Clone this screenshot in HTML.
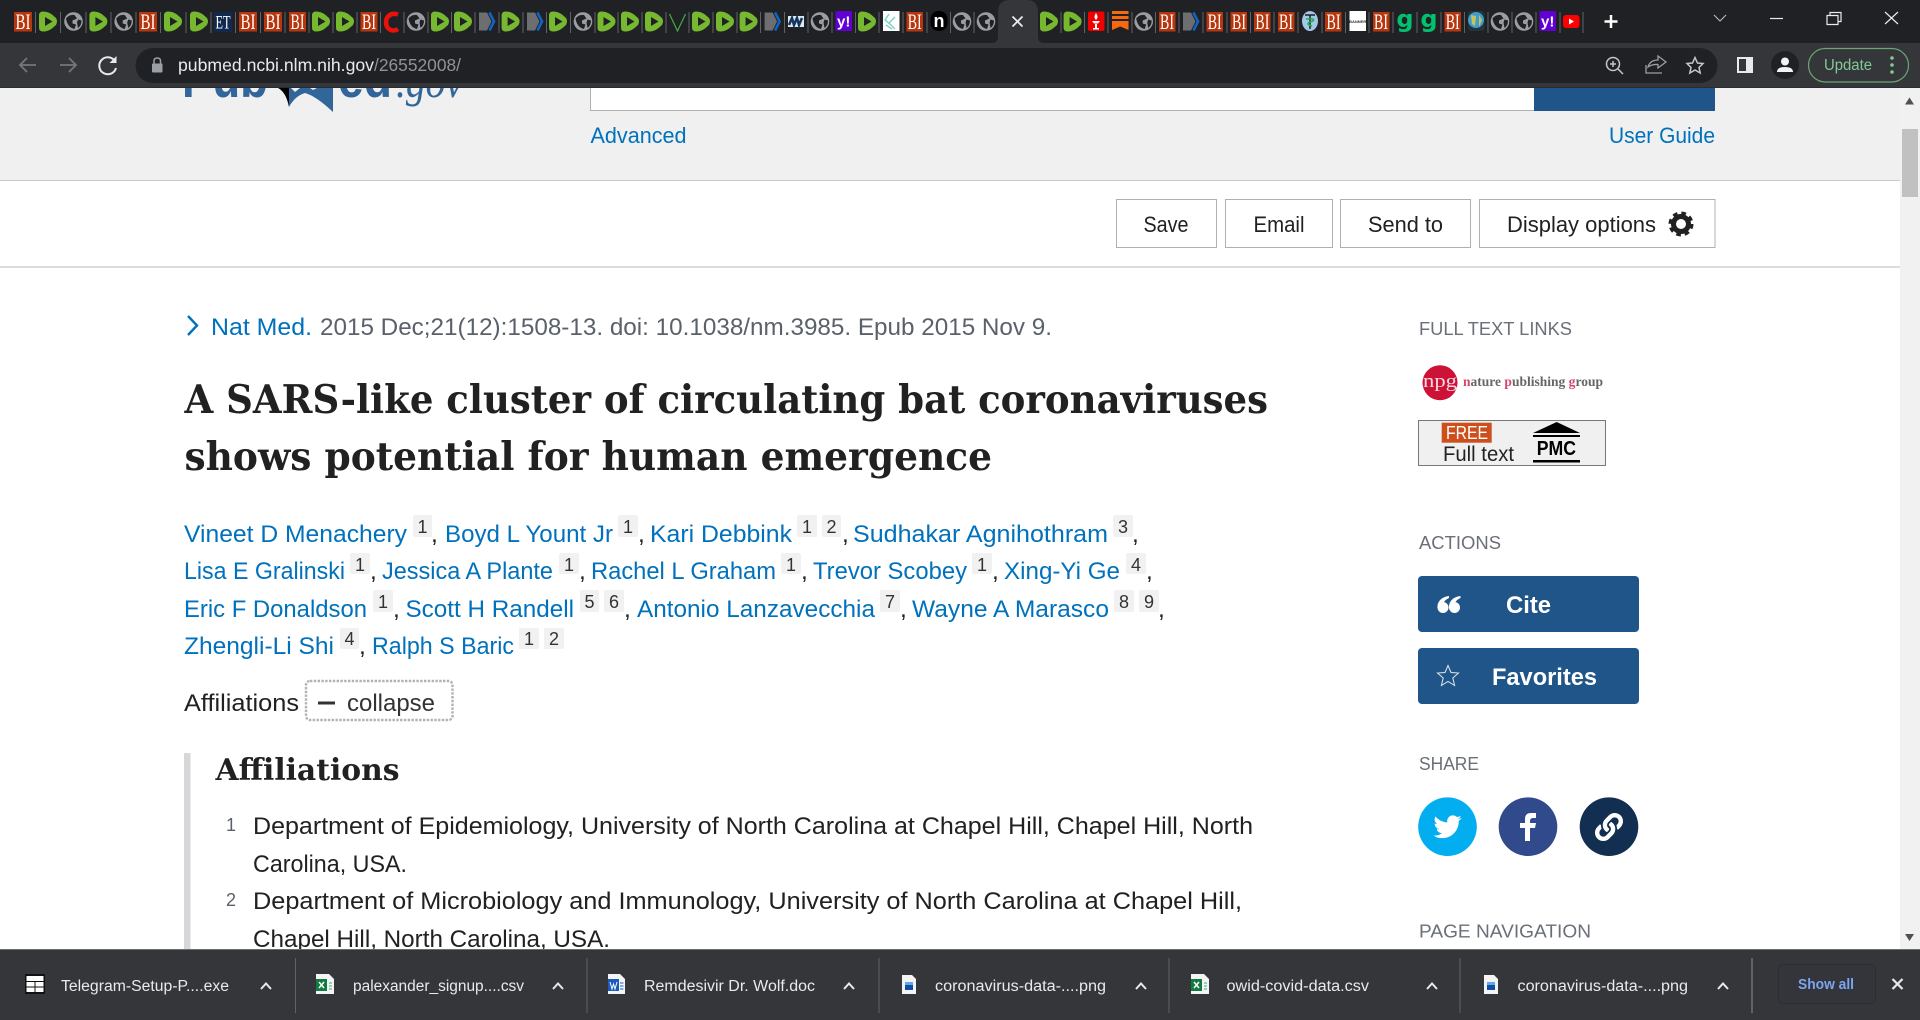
<!DOCTYPE html>
<html lang="en">
<head>
<meta charset="utf-8">
<title>A SARS-like cluster of circulating bat coronaviruses - PubMed</title>
<style>
html,body{margin:0;padding:0;background:#fff;overflow:hidden;width:1920px;height:1020px}
svg{display:block}
text{font-family:"Liberation Sans",sans-serif}
.l{fill:#0071bc;font-size:24.5px}
.b{fill:#212121;font-size:24.5px}
.c{fill:#212121;font-size:24.5px}
.s{fill:#333;font-size:18px;text-anchor:middle}
.h{fill:#6a6f78;font-size:18.5px}
.bi{font-family:"Liberation Serif",serif;font-size:22px;fill:#fff;text-anchor:middle}
.dl{fill:#e8eaed;font-size:15.5px}
.btn{fill:#212121;font-size:22.5px;text-anchor:middle}
.t{font-family:"DejaVu Serif",serif;font-weight:bold;font-size:39px;fill:#212121}
</style>
</head>
<body>
<svg width="1920" height="1020" viewBox="0 0 1920 1020" xmlns="http://www.w3.org/2000/svg">
<defs>
<clipPath id="pg"><rect x="0" y="88" width="1920" height="861"/></clipPath>
<g id="d"><path d="M-9-6Q-9-10-5-10Q0-10 4-7L8-3.5Q10-.5 8 3.5L4 7Q0 10-5 10Q-9 10-9 6Z" fill="#76b82f"/><path d="M-3-4.5L4.5 0L-3 4.5Z" fill="#202124"/></g>
<g id="w"><circle r="9.3" fill="#9a9ea3"/><path d="M-7.5-3Q-4-7.5 1-6.5L3.5-3L-1-1L-1 2L2.5 3L1 7.5Q-6 6-7.5-3Z" fill="#202124"/><path d="M4.5-2L8-1Q8 4 4.5 6.5L3.5 1Z" fill="#202124"/></g>
<g id="a"><path d="M-8-9H0L4.5 0L0 9H-8Z" fill="#6d6e71"/><path d="M2.5-9L7 0L2.5 9" fill="none" stroke="#0e66c2" stroke-width="2.6"/></g>
<g id="xl"><path d="M0 0H13L18 5V20H0Z" fill="#f4f4f4"/><rect x="0" y="5" width="11" height="12" fill="#107c41"/><path d="M3 8L8 14M8 8L3 14" stroke="#fff" stroke-width="1.5"/><path d="M13 9H16M13 12H16M13 15H16" stroke="#5fb98a" stroke-width="1.3"/></g>
<g id="im"><path d="M0 0H10L14 4V19H0Z" fill="#f4f4f4"/><rect x="3" y="7" width="8" height="8" fill="#0f4ea8"/><rect x="3" y="7" width="8" height="3" fill="#66a6e8"/></g>
</defs>

<!-- tab strip -->
<rect x="0" y="0" width="1920" height="43" fill="#202124"/>
<path d="M992 43Q998 43 998 36V12Q998 0 1010 0H1026Q1038 0 1038 12V36Q1038 43 1044 43Z" fill="#35363a"/>
<path d="M35.5 12v21M60.5 12v21M86 12v21M111 12v21M136 12v21M160.5 12v21M186 12v21M211 12v21M235.5 12v21M260.5 12v21M285 12v21M309 12v21M333 12v21M357 12v21M380.5 12v21M404 12v21M428 12v21M451.5 12v21M475 12v21M499 12v21M523 12v21M546.5 12v21M570.5 12v21M595 12v21M618 12v21M642 12v21M666 12v21M689 12v21M713 12v21M737 12v21M760.5 12v21M784.5 12v21M808 12v21M832 12v21M855.5 12v21M879 12v21M903 12v21M927 12v21M950.5 12v21M974 12v21M1061 12v21M1084.5 12v21M1108 12v21M1132 12v21M1155.5 12v21M1179 12v21M1203 12v21M1227 12v21M1250.5 12v21M1274 12v21M1298 12v21M1322 12v21M1345.5 12v21M1369 12v21M1393 12v21M1417 12v21M1441 12v21M1464.5 12v21M1488 12v21M1512 12v21M1536 12v21M1560 12v21M1583 12v21" stroke="#5f6368" stroke-width="1" fill="none"/>

<g>
<rect x="14" y="12" width="18" height="19.5" fill="#b8360e"/><text class="bi" x="23" y="29" textLength="15" lengthAdjust="spacingAndGlyphs">BI</text>
<use href="#d" x="48" y="21.5"/><use href="#w" x="73.5" y="21.5"/><use href="#d" x="98.4" y="21.5"/><use href="#w" x="123.7" y="21.5"/>
<rect x="139" y="12" width="18" height="19.5" fill="#b8360e"/><text class="bi" x="148" y="29" textLength="15" lengthAdjust="spacingAndGlyphs">BI</text>
<use href="#d" x="173" y="21.5"/><use href="#d" x="199" y="21.5"/>
<rect x="214" y="12" width="18" height="20" fill="#12294f"/><text class="bi" x="223" y="28.5" style="font-size:19px" textLength="15" lengthAdjust="spacingAndGlyphs">ET</text>
<rect x="239" y="12" width="18" height="19.5" fill="#b8360e"/><text class="bi" x="248" y="29" textLength="15" lengthAdjust="spacingAndGlyphs">BI</text>
<rect x="264" y="12" width="18" height="19.5" fill="#b8360e"/><text class="bi" x="273" y="29" textLength="15" lengthAdjust="spacingAndGlyphs">BI</text>
<rect x="289" y="12" width="17" height="19.5" fill="#b8360e"/><text class="bi" x="297.5" y="29" textLength="14" lengthAdjust="spacingAndGlyphs">BI</text>
<use href="#d" x="321" y="21.5"/><use href="#d" x="345" y="21.5"/>
<rect x="360.5" y="12" width="17" height="19.5" fill="#b8360e"/><text class="bi" x="369" y="29" textLength="14" lengthAdjust="spacingAndGlyphs">BI</text>
<path d="M398 14.5Q390 12 386.5 19Q385 26 389 29Q393 32 398 29" fill="none" stroke="#e8110c" stroke-width="4.5"/>
<use href="#w" x="416" y="21.5"/><use href="#d" x="440" y="21.5"/><use href="#d" x="463" y="21.5"/><use href="#a" x="487" y="21.5"/><use href="#d" x="510.6" y="21.5"/><use href="#a" x="535" y="21.5"/><use href="#d" x="558" y="21.5"/><use href="#w" x="583" y="21.5"/><use href="#d" x="606.5" y="21.5"/><use href="#d" x="630" y="21.5"/><use href="#d" x="654" y="21.5"/>
<path d="M669.5 14L677.5 31L685.5 14" fill="none" stroke="#3fae49" stroke-width="1.2"/>
<use href="#d" x="701" y="21.5"/><use href="#d" x="725" y="21.5"/><use href="#d" x="748.6" y="21.5"/><use href="#a" x="772.6" y="21.5"/>
<rect x="788" y="16" width="16" height="11" fill="#dfe7ef"/><path d="M789 25L792 18L794 25L797 18L799 25L802 18" fill="none" stroke="#12365f" stroke-width="2.5"/>
<use href="#w" x="820" y="21.5"/>
<rect x="835.5" y="11" width="16.5" height="20" fill="#6001d2"/><text x="843.7" y="26.5" fill="#fff" text-anchor="middle" style="font-size:15px;font-weight:bold">y!</text>
<use href="#d" x="867" y="21.5"/>
<rect x="883" y="11" width="16.5" height="20" fill="#fff"/><path d="M889 14L885 20L891 25M895 17L889 23L895 29M886 25L892 29" fill="none" stroke="#7fd3c6" stroke-width="1.5"/>
<rect x="906.5" y="12" width="16.5" height="19.5" fill="#b8360e"/><text class="bi" x="914.7" y="29" textLength="14" lengthAdjust="spacingAndGlyphs">BI</text>
<rect x="930.5" y="11" width="17" height="20" rx="8" fill="#000"/><text x="939" y="27" text-anchor="middle" style="font-size:18px;font-weight:bold" fill="#fff">n</text>
<use href="#w" x="962" y="21.5"/><use href="#w" x="986" y="21.5"/>
<path d="M1012.5 16.5L1022.5 26.5M1022.5 16.5L1012.5 26.5" stroke="#e8eaed" stroke-width="1.8" fill="none"/>
<use href="#d" x="1049" y="21.5"/><use href="#d" x="1072.6" y="21.5"/>
<rect x="1088" y="11.5" width="16.5" height="19.5" rx="2" fill="#f00000"/><path d="M1096 13Q1099 17 1096 20Q1093 17 1096 13ZM1092 21H1100L1098 23.5H1094ZM1095 24H1097V28H1095ZM1093 28H1099V29.5H1093Z" fill="#fff"/>
<rect x="1112" y="11" width="16.5" height="3" fill="#f7690f"/><rect x="1112" y="16" width="16.5" height="3" fill="#f7690f"/><path d="M1112 21H1128.5V30L1120.25 26.5L1112 30Z" fill="#f7690f"/>
<use href="#w" x="1143.7" y="21.5"/>
<rect x="1159" y="12" width="16.5" height="19.5" fill="#b8360e"/><text class="bi" x="1167" y="29" textLength="14" lengthAdjust="spacingAndGlyphs">BI</text>
<use href="#a" x="1191" y="21.5"/>
<rect x="1206.5" y="12" width="16.5" height="19.5" fill="#b8360e"/><text class="bi" x="1214.7" y="29" textLength="14" lengthAdjust="spacingAndGlyphs">BI</text>
<rect x="1230.5" y="12" width="16.5" height="19.5" fill="#b8360e"/><text class="bi" x="1239" y="29" textLength="14" lengthAdjust="spacingAndGlyphs">BI</text>
<rect x="1254" y="12" width="16.5" height="19.5" fill="#b8360e"/><text class="bi" x="1262.4" y="29" textLength="14" lengthAdjust="spacingAndGlyphs">BI</text>
<rect x="1278" y="12" width="16.5" height="19.5" fill="#b8360e"/><text class="bi" x="1286" y="29" textLength="14" lengthAdjust="spacingAndGlyphs">BI</text>
<ellipse cx="1310" cy="21" rx="8" ry="10" fill="#a4c6e8"/><path d="M1305 15H1315M1310 15V29" stroke="#222" stroke-width="1.5"/><path d="M1306 19H1313Q1315 21 1310 22Q1305 24 1312 26" fill="none" stroke="#1fae4a" stroke-width="1.5"/>
<rect x="1325" y="12" width="16.5" height="19.5" fill="#b8360e"/><text class="bi" x="1333.5" y="29" textLength="14" lengthAdjust="spacingAndGlyphs">BI</text>
<rect x="1349.5" y="11" width="16.5" height="20" fill="#fff"/><text x="1357.7" y="23" text-anchor="middle" style="font-size:4px;font-weight:bold" fill="#333">BANNER</text>
<rect x="1373" y="12" width="16.5" height="19.5" fill="#b8360e"/><text class="bi" x="1381" y="29" textLength="14" lengthAdjust="spacingAndGlyphs">BI</text>
<text x="1405" y="27" text-anchor="middle" style="font-family:'DejaVu Sans',sans-serif;font-size:24px;font-weight:bold" fill="#00c26e">g</text>
<text x="1429" y="27" text-anchor="middle" style="font-family:'DejaVu Sans',sans-serif;font-size:24px;font-weight:bold" fill="#00c26e">g</text>
<rect x="1444.5" y="12" width="16.5" height="19.5" fill="#b8360e"/><text class="bi" x="1452.7" y="29" textLength="14" lengthAdjust="spacingAndGlyphs">BI</text>
<rect x="1468" y="11" width="16.5" height="20" rx="3" fill="#24333d"/><circle cx="1476" cy="20" r="8" fill="#3f9ccf"/><path d="M1471 15L1476 16L1475 26L1472 24ZM1479 15L1482 20L1479 27Z" fill="#c6c35a"/>
<use href="#w" x="1500" y="21.5"/><use href="#w" x="1524" y="21.5"/>
<rect x="1539.5" y="11" width="16.5" height="20" fill="#6001d2"/><text x="1547.7" y="26.5" text-anchor="middle" style="font-size:15px;font-weight:bold" fill="#fff">y!</text>
<rect x="1563" y="15" width="16.5" height="13" rx="3" fill="#f00"/><path d="M1569 18.5L1574 21.5L1569 24.5Z" fill="#fff"/>
</g>

<path d="M1611 15V28M1604.5 21.5H1617.5" stroke="#fff" stroke-width="2.5"/>
<path d="M1714 15L1720 21L1726 15" fill="none" stroke="#bdc1c6" stroke-width="1"/>
<path d="M1770 18.5H1783" stroke="#e8eaed" stroke-width="1.2"/>
<path d="M1827 15.5H1838V24.5H1827ZM1830 15.5V12.5H1841V21.5H1838" fill="none" stroke="#e8eaed" stroke-width="1.2"/>
<path d="M1885 12L1898 24M1898 12L1885 24" stroke="#e8eaed" stroke-width="1.2"/>

<!-- toolbar -->
<rect x="0" y="43" width="1920" height="45" fill="#35363a"/>
<rect x="135.5" y="48" width="1582" height="35" rx="17.5" fill="#202124"/>
<path d="M36 65H20M27 58L20 65L27 72" fill="none" stroke="#75767a" stroke-width="1.8"/>
<path d="M60 65H76M69 58L76 65L69 72" fill="none" stroke="#75767a" stroke-width="1.8"/>
<path d="M114.5 60.5A8.5 8.5 0 1 0 116 68" fill="none" stroke="#e8eaed" stroke-width="2"/><path d="M116.5 56V63H109.5Z" fill="#e8eaed"/>
<rect x="152" y="63.5" width="10.5" height="9" rx="1" fill="#9aa0a6"/><path d="M154 64V61Q154 58 157.25 58Q160.5 58 160.5 61V64" fill="none" stroke="#9aa0a6" stroke-width="1.5"/>
<text x="178" y="71" style="font-size:17.5px" fill="#e8eaed" textLength="196" lengthAdjust="spacingAndGlyphs">pubmed.ncbi.nlm.nih.gov</text>
<text x="374" y="71" style="font-size:17.5px" fill="#8f9399" textLength="87" lengthAdjust="spacingAndGlyphs">/26552008/</text>
<circle cx="1613" cy="64" r="6.5" fill="none" stroke="#c4c7c5" stroke-width="1.5"/><path d="M1618 69L1623 74M1610 64H1616M1613 61V67" stroke="#c4c7c5" stroke-width="1.5"/>
<path d="M1646 65V73H1662M1648 67Q1650 60 1658 60V56L1666 62L1658 68V64.5Q1652 64 1648 67Z" fill="none" stroke="#9b9ea2" stroke-width="1.3"/>
<path d="M1695 57.5L1697.5 63L1703 63.5L1699 67.5L1700.2 73L1695 70L1689.8 73L1691 67.5L1687 63.5L1692.5 63Z" fill="none" stroke="#c4c7c5" stroke-width="1.5"/>
<rect x="1737" y="57" width="16" height="16" fill="#e8eaed"/><rect x="1739" y="59" width="7" height="12" fill="#35363a"/>
<circle cx="1785" cy="65" r="14" fill="#202124"/><circle cx="1785" cy="61.5" r="4" fill="#f1f3f4"/><path d="M1777 72Q1777 67 1785 67Q1793 67 1793 72Z" fill="#f1f3f4"/>
<rect x="1808.5" y="48.5" width="100" height="33.5" rx="16.75" fill="none" stroke="#6aa674" stroke-width="1.2"/>
<text x="1824" y="70" style="font-size:15.5px" fill="#81c995" textLength="48" lengthAdjust="spacingAndGlyphs">Update</text>
<circle cx="1892" cy="58" r="1.8" fill="#81c995"/><circle cx="1892" cy="65" r="1.8" fill="#81c995"/><circle cx="1892" cy="72" r="1.8" fill="#81c995"/>
<rect x="0" y="87" width="1920" height="1" fill="#2b2c2f"/>

<!-- page -->
<g clip-path="url(#pg)">
<rect x="0" y="88" width="1920" height="861" fill="#fff"/>
<rect x="0" y="88" width="1900" height="92" fill="#f0f0f0"/>
<rect x="0" y="180" width="1900" height="1" fill="#c8c8c8"/>
<!-- logo -->
<text x="182" y="97" style="font-size:56px;font-weight:bold" fill="#326599" textLength="86" lengthAdjust="spacingAndGlyphs">Pub</text>
<text x="338" y="97" style="font-size:56px;font-weight:bold" fill="#326599" textLength="54" lengthAdjust="spacingAndGlyphs">ed</text>
<text x="396" y="97" style="font-family:'Liberation Serif',serif;font-size:46px;font-style:italic" fill="#326599" textLength="67" lengthAdjust="spacingAndGlyphs">.gov</text>
<path d="M278 88Q286 92 289 107V88Z" fill="#000"/>
<path d="M289 107V88H333V112Q316 96 305 93Q295 96 289 107Z" fill="#326599"/>
<path d="M291 88L295 92L300 88ZM310 88L313 90L317 88Z" fill="#f0f0f0"/>
<!-- search -->
<rect x="590" y="88" width="944" height="22" fill="#fff"/>
<path d="M590.5 88V110.5H1534" fill="none" stroke="#aeb0b5" stroke-width="1"/>
<rect x="1534" y="88" width="181" height="23" fill="#20558a"/>
<text x="590.5" y="143" class="l" style="font-size:22px" textLength="96" lengthAdjust="spacingAndGlyphs">Advanced</text>
<text x="1609" y="143" class="l" style="font-size:22px" textLength="106" lengthAdjust="spacingAndGlyphs">User Guide</text>
<!-- action row -->
<g fill="#fff" stroke="#aeb0b5" stroke-width="1">
<rect x="1116.5" y="199.5" width="100" height="48"/>
<rect x="1225.5" y="199.5" width="107" height="48"/>
<rect x="1340.5" y="199.5" width="130" height="48"/>
<rect x="1479.5" y="199.5" width="235.5" height="48"/>
</g>
<text class="btn" x="1166" y="232" textLength="45" lengthAdjust="spacingAndGlyphs">Save</text>
<text class="btn" x="1279" y="232" textLength="51" lengthAdjust="spacingAndGlyphs">Email</text>
<text class="btn" x="1405.5" y="232" textLength="75" lengthAdjust="spacingAndGlyphs">Send to</text>
<text x="1507" y="232" style="font-size:22.5px" fill="#212121" textLength="149" lengthAdjust="spacingAndGlyphs">Display options</text>
<circle cx="1681" cy="224" r="7.5" fill="none" stroke="#212121" stroke-width="5"/>
<circle cx="1681" cy="224" r="10.5" fill="none" stroke="#212121" stroke-width="4" stroke-dasharray="4.5 3.75"/>
<rect x="0" y="266" width="1900" height="2" fill="#dcdcdc"/>
<!-- citation -->
<path d="M188 316L197 325.5L188 335" fill="none" stroke="#0071bc" stroke-width="2.4"/>
<text x="211" y="335" class="l" style="font-size:24px" textLength="101" lengthAdjust="spacingAndGlyphs">Nat Med.</text>
<text x="320" y="335" style="font-size:24px" fill="#5b616b" textLength="732" lengthAdjust="spacingAndGlyphs">2015 Dec;21(12):1508-13. doi: 10.1038/nm.3985. Epub 2015 Nov 9.</text>
<!-- title -->
<text class="t" x="184.5" y="413" textLength="1083.5" lengthAdjust="spacingAndGlyphs">A SARS-like cluster of circulating bat coronaviruses</text>
<text class="t" x="184.5" y="470" textLength="807.5" lengthAdjust="spacingAndGlyphs">shows potential for human emergence</text>
<!-- author boxes -->
<g fill="#f1f1f1">
<rect x="413" y="515" width="19" height="22" rx="2"/><rect x="618" y="515" width="20" height="22" rx="2"/><rect x="797" y="515" width="20" height="22" rx="2"/><rect x="822" y="515" width="19" height="22" rx="2"/><rect x="1113" y="515" width="20" height="22" rx="2"/>
<rect x="350" y="553" width="20" height="21" rx="2"/><rect x="559" y="553" width="20" height="21" rx="2"/><rect x="781" y="553" width="20" height="21" rx="2"/><rect x="972" y="553" width="20" height="21" rx="2"/><rect x="1126" y="553" width="20" height="21" rx="2"/>
<rect x="373" y="590" width="20" height="22" rx="2"/><rect x="580" y="590" width="19" height="22" rx="2"/><rect x="604" y="590" width="20" height="22" rx="2"/><rect x="880" y="590" width="20" height="22" rx="2"/><rect x="1114" y="590" width="20" height="22" rx="2"/><rect x="1139" y="590" width="20" height="22" rx="2"/>
<rect x="340" y="628" width="19" height="21" rx="2"/><rect x="519" y="628" width="20" height="21" rx="2"/><rect x="544" y="628" width="20" height="21" rx="2"/>
</g>
<!-- line 1 -->
<text class="l" x="184" y="542" textLength="223" lengthAdjust="spacingAndGlyphs">Vineet D Menachery</text><text class="s" x="422.5" y="533">1</text><text class="c" x="431" y="542">,</text>
<text class="l" x="445" y="542" textLength="168" lengthAdjust="spacingAndGlyphs">Boyd L Yount Jr</text><text class="s" x="628" y="533">1</text><text class="c" x="638" y="542">,</text>
<text class="l" x="650" y="542" textLength="142" lengthAdjust="spacingAndGlyphs">Kari Debbink</text><text class="s" x="807" y="533">1</text><text class="s" x="831.5" y="533">2</text><text class="c" x="842" y="542">,</text>
<text class="l" x="853" y="542" textLength="255" lengthAdjust="spacingAndGlyphs">Sudhakar Agnihothram</text><text class="s" x="1123" y="533">3</text><text class="c" x="1132" y="542">,</text>
<!-- line 2 -->
<text class="l" x="184" y="579" textLength="161" lengthAdjust="spacingAndGlyphs">Lisa E Gralinski</text><text class="s" x="360" y="571">1</text><text class="c" x="370" y="579">,</text>
<text class="l" x="382" y="579" textLength="171" lengthAdjust="spacingAndGlyphs">Jessica A Plante</text><text class="s" x="569" y="571">1</text><text class="c" x="579" y="579">,</text>
<text class="l" x="591" y="579" textLength="185" lengthAdjust="spacingAndGlyphs">Rachel L Graham</text><text class="s" x="791" y="571">1</text><text class="c" x="801" y="579">,</text>
<text class="l" x="813" y="579" textLength="154" lengthAdjust="spacingAndGlyphs">Trevor Scobey</text><text class="s" x="982" y="571">1</text><text class="c" x="992" y="579">,</text>
<text class="l" x="1004" y="579" textLength="116" lengthAdjust="spacingAndGlyphs">Xing-Yi Ge</text><text class="s" x="1136" y="571">4</text><text class="c" x="1146" y="579">,</text>
<!-- line 3 -->
<text class="l" x="184" y="617" textLength="183" lengthAdjust="spacingAndGlyphs">Eric F Donaldson</text><text class="s" x="383" y="608">1</text><text class="c" x="393" y="617">,</text>
<text class="l" x="405.5" y="617" textLength="168.5" lengthAdjust="spacingAndGlyphs">Scott H Randell</text><text class="s" x="589.5" y="608">5</text><text class="s" x="614" y="608">6</text><text class="c" x="624" y="617">,</text>
<text class="l" x="637" y="617" textLength="238" lengthAdjust="spacingAndGlyphs">Antonio Lanzavecchia</text><text class="s" x="890" y="608">7</text><text class="c" x="900" y="617">,</text>
<text class="l" x="912" y="617" textLength="197" lengthAdjust="spacingAndGlyphs">Wayne A Marasco</text><text class="s" x="1124" y="608">8</text><text class="s" x="1149" y="608">9</text><text class="c" x="1158" y="617">,</text>
<!-- line 4 -->
<text class="l" x="184" y="654" textLength="150" lengthAdjust="spacingAndGlyphs">Zhengli-Li Shi</text><text class="s" x="349.5" y="645">4</text><text class="c" x="359" y="654">,</text>
<text class="l" x="372" y="654" textLength="142" lengthAdjust="spacingAndGlyphs">Ralph S Baric</text><text class="s" x="529" y="645">1</text><text class="s" x="554" y="645">2</text>
<!-- affiliations toggle -->
<text class="b" x="184" y="711" textLength="115" lengthAdjust="spacingAndGlyphs">Affiliations</text>
<rect x="306" y="681" width="146.5" height="39" rx="4" fill="none" stroke="#b0b1b5" stroke-width="2.4" stroke-dasharray="2.4 1.4"/>
<rect x="318" y="701.5" width="17" height="3" fill="#333"/>
<text x="347" y="711" style="font-size:24.5px" fill="#333" textLength="88" lengthAdjust="spacingAndGlyphs">collapse</text>
<!-- affiliations -->
<rect x="184" y="753" width="6.5" height="200" fill="#d6d7d9"/>
<text x="215.5" y="780" style="font-family:'DejaVu Serif',serif;font-weight:bold;font-size:30px" fill="#212121" textLength="184" lengthAdjust="spacingAndGlyphs">Affiliations</text>
<text x="226" y="831" style="font-size:18px" fill="#5b616b">1</text>
<text class="b" x="253" y="834" textLength="1000" lengthAdjust="spacingAndGlyphs">Department of Epidemiology, University of North Carolina at Chapel Hill, Chapel Hill, North</text>
<text class="b" x="253" y="872" textLength="154" lengthAdjust="spacingAndGlyphs">Carolina, USA.</text>
<text x="226" y="906" style="font-size:18px" fill="#5b616b">2</text>
<text class="b" x="253" y="909" textLength="989" lengthAdjust="spacingAndGlyphs">Department of Microbiology and Immunology, University of North Carolina at Chapel Hill,</text>
<text class="b" x="253" y="947" textLength="357" lengthAdjust="spacingAndGlyphs">Chapel Hill, North Carolina, USA.</text>
<!-- sidebar -->
<text class="h" x="1419" y="335" textLength="153" lengthAdjust="spacingAndGlyphs">FULL TEXT LINKS</text>
<circle cx="1440" cy="382.7" r="17.5" fill="#cc1236"/>
<text x="1440" y="387" text-anchor="middle" style="font-family:'Liberation Serif',serif;font-size:19px" fill="#f8d8df" textLength="34" lengthAdjust="spacingAndGlyphs">npg</text>
<text x="1463" y="386" style="font-family:'Liberation Serif',serif;font-size:14px;font-weight:bold" fill="#666" textLength="140" lengthAdjust="spacingAndGlyphs"><tspan fill="#d8476b">n</tspan>ature <tspan fill="#d8476b">p</tspan>ublishing <tspan fill="#d8476b">g</tspan>roup</text>
<rect x="1418.5" y="420.5" width="187" height="45" fill="#f0f0f0" stroke="#777" stroke-width="1"/>
<rect x="1441.7" y="422.7" width="50" height="20" fill="#cc4f1c"/>
<text x="1446" y="439" style="font-size:18.5px" fill="#fff" textLength="42" lengthAdjust="spacingAndGlyphs">FREE</text>
<text x="1443" y="461" style="font-size:21px" fill="#222" textLength="71" lengthAdjust="spacingAndGlyphs">Full text</text>
<path d="M1533 433L1556.7 422L1580 433Z" fill="#000"/><rect x="1533" y="435" width="47" height="2" fill="#000"/>
<text x="1536.7" y="455" style="font-size:20px;font-weight:bold" fill="#000" textLength="39.3" lengthAdjust="spacingAndGlyphs">PMC</text>
<rect x="1533" y="460" width="47" height="2.5" fill="#000"/>
<text class="h" x="1419" y="549" textLength="82" lengthAdjust="spacingAndGlyphs">ACTIONS</text>
<rect x="1418" y="576" width="221" height="56" rx="4" fill="#20558a"/>
<circle cx="1443" cy="607.5" r="5.5" fill="#fff"/><path d="M1449 596C1441 597 1437 602 1437.5 608L1443 606C1443 602 1445 600 1449 598Z" fill="#fff"/>
<circle cx="1454.5" cy="607.5" r="5.5" fill="#fff"/><path d="M1460.5 596C1452.5 597 1448.5 602 1449 608L1454.5 606C1454.5 602 1456.5 600 1460.5 598Z" fill="#fff"/>
<text x="1506" y="613" style="font-size:24.5px;font-weight:bold" fill="#fff" textLength="45" lengthAdjust="spacingAndGlyphs">Cite</text>
<rect x="1418" y="648" width="221" height="56" rx="4" fill="#20558a"/>
<path d="M1448 665.5L1451 672.5L1458.5 673L1452.8 678L1454.6 685.5L1448 681.5L1441.4 685.5L1443.2 678L1437.5 673L1445 672.5Z" fill="none" stroke="#dfe7f0" stroke-width="1"/>
<text x="1492" y="685" style="font-size:24.5px;font-weight:bold" fill="#fff" textLength="105" lengthAdjust="spacingAndGlyphs">Favorites</text>
<text class="h" x="1419" y="770" textLength="60" lengthAdjust="spacingAndGlyphs">SHARE</text>
<circle cx="1447.5" cy="826.7" r="29.3" fill="#02aeef"/>
<path transform="translate(1433.5 812.7) scale(1.17)" d="M23.953 4.57a10 10 0 01-2.825.775 4.958 4.958 0 002.163-2.723c-.951.555-2.005.959-3.127 1.184a4.92 4.92 0 00-8.384 4.482C7.69 8.095 4.067 6.13 1.64 3.162a4.822 4.822 0 00-.666 2.475c0 1.71.87 3.213 2.188 4.096a4.904 4.904 0 01-2.228-.616v.06a4.923 4.923 0 003.946 4.827 4.996 4.996 0 01-2.212.085 4.936 4.936 0 004.604 3.417 9.867 9.867 0 01-6.102 2.105c-.39 0-.779-.023-1.17-.067a13.995 13.995 0 007.557 2.209c9.053 0 13.998-7.496 13.998-13.985 0-.21 0-.42-.015-.63A9.935 9.935 0 0024 4.59z" fill="#fff"/>
<circle cx="1528" cy="826.7" r="29.3" fill="#314a8c"/>
<path transform="translate(1528 827)" d="M-3 14V1H-8V-4H-3V-8Q-3-14 3-14H8V-9H5Q2-9 2-6V-4H8L7 1H2V14Z" fill="#fff"/>
<circle cx="1609" cy="826.7" r="29.3" fill="#122e51"/>
<path transform="translate(1595 813) scale(.0547)" fill="#fff" d="M326.612 185.391c59.747 59.809 58.927 155.698.36 214.59-.11.12-.24.25-.36.37l-67.2 67.2c-59.27 59.27-155.699 59.262-214.96 0-59.27-59.26-59.27-155.7 0-214.96l37.106-37.106c9.84-9.84 26.786-3.3 27.294 10.606.648 17.722 3.826 35.527 9.69 52.721 1.986 5.822.567 12.262-3.783 16.612l-13.087 13.087c-28.026 28.026-28.905 73.66-1.155 101.96 28.024 28.579 74.086 28.749 102.325.51l67.2-67.19c28.191-28.191 28.073-73.757 0-101.83-3.701-3.694-7.429-6.564-10.341-8.569a16.037 16.037 0 0 1-6.947-12.606c-.396-10.567 3.348-21.456 11.698-29.806l21.054-21.055c5.521-5.521 14.182-6.199 20.584-1.731a152.482 152.482 0 0 1 20.522 17.197zM467.547 44.449c-59.261-59.262-155.69-59.27-214.96 0l-67.2 67.2c-.12.12-.25.25-.36.37-58.566 58.892-59.387 154.781.36 214.59a152.454 152.454 0 0 0 20.521 17.196c6.402 4.468 15.064 3.789 20.584-1.731l21.054-21.055c8.35-8.35 12.094-19.239 11.698-29.806a16.037 16.037 0 0 0-6.947-12.606c-2.912-2.005-6.64-4.875-10.341-8.569-28.073-28.073-28.191-73.639 0-101.83l67.2-67.19c28.239-28.239 74.3-28.069 102.325.51 27.75 28.3 26.872 73.934-1.155 101.96l-13.087 13.087c-4.35 4.35-5.769 10.79-3.783 16.612 5.864 17.194 9.042 34.999 9.69 52.721.509 13.906 17.454 20.446 27.294 10.606l37.106-37.106c59.271-59.259 59.271-155.699.001-214.959z"/>
<text class="h" x="1419" y="937.5" textLength="172" lengthAdjust="spacingAndGlyphs">PAGE NAVIGATION</text>
<!-- scrollbar -->
<rect x="1900" y="88" width="20" height="861" fill="#f1f1f1"/>
<path d="M1905 104.5H1914L1909.5 97.5Z" fill="#505050"/>
<rect x="1902" y="129" width="16" height="68" fill="#c1c1c1"/>
<path d="M1905 934H1914L1909.5 941Z" fill="#505050"/>
</g>

<!-- download bar -->
<rect x="0" y="949" width="1920" height="71" fill="#35363a"/>
<rect x="0" y="949" width="1920" height="1" fill="#6b6c70"/>
<path d="M295.5 958V1013M587 958V1013M879 958V1013M1169 958V1013M1460 958V1013" stroke="#5f6368" stroke-width="1"/>
<rect x="1751" y="958" width="2" height="55" fill="#5f6368"/>
<rect x="25" y="974" width="20" height="20" fill="#111"/><rect x="26.5" y="976" width="17" height="5" fill="#fff"/><rect x="26.5" y="982" width="8" height="4.5" fill="#fff"/><rect x="35.5" y="982" width="8" height="4.5" fill="#fff"/><rect x="26.5" y="987.5" width="8" height="4.5" fill="#fff"/><rect x="35.5" y="987.5" width="8" height="4.5" fill="#fff"/>
<text class="dl" x="61" y="991" textLength="168" lengthAdjust="spacingAndGlyphs">Telegram-Setup-P....exe</text>
<use href="#xl" x="316" y="974"/>
<text class="dl" x="353" y="991" textLength="171" lengthAdjust="spacingAndGlyphs">palexander_signup....csv</text>
<path d="M608 974H620L625 979V994H608Z" fill="#f4f4f4"/><rect x="608" y="979" width="11" height="12" fill="#185abd"/><path d="M610 982L612 989L613.5 984L615 989L617 982" fill="none" stroke="#fff" stroke-width="1"/><path d="M620 983H623.5M620 986H623.5M620 989H623.5" stroke="#3f7fd6" stroke-width="1.2"/>
<text class="dl" x="644" y="991" textLength="171" lengthAdjust="spacingAndGlyphs">Remdesivir Dr. Wolf.doc</text>
<use href="#im" x="902" y="975"/>
<text class="dl" x="935" y="991" textLength="171" lengthAdjust="spacingAndGlyphs">coronavirus-data-....png</text>
<use href="#xl" x="1191" y="974"/>
<text class="dl" x="1226.5" y="991" textLength="142.5" lengthAdjust="spacingAndGlyphs">owid-covid-data.csv</text>
<use href="#im" x="1484" y="975"/>
<text class="dl" x="1517.5" y="991" textLength="170.5" lengthAdjust="spacingAndGlyphs">coronavirus-data-....png</text>
<path d="M261 989L266 983.5L271 989M553 989L558 983.5L563 989M844 989L849 983.5L854 989M1136 989L1141 983.5L1146 989M1427 989L1432 983.5L1437 989M1718 989L1723 983.5L1728 989" fill="none" stroke="#e8eaed" stroke-width="2"/>
<rect x="1778.5" y="964.5" width="97" height="39" rx="4" fill="#34353a" stroke="#2d2e31" stroke-width="1"/>
<text x="1798" y="989" style="font-size:15px;font-weight:bold" fill="#7ba6ef" textLength="56" lengthAdjust="spacingAndGlyphs">Show all</text>
<path d="M1892.5 979L1902.5 989M1902.5 979L1892.5 989" stroke="#e8eaed" stroke-width="2.2"/>
</svg>
</body>
</html>
